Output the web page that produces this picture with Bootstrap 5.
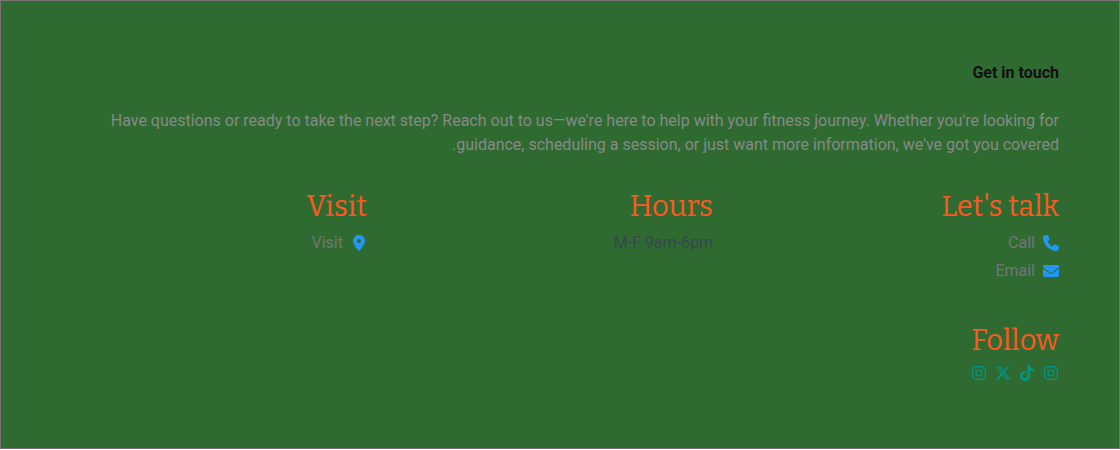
<!DOCTYPE html>
<html lang="en" dir="rtl">
<head>
<meta charset="utf-8">
<meta name="viewport" content="width=device-width, initial-scale=1">
<title>Get in touch</title>
<link href="https://cdn.jsdelivr.net/npm/bootstrap@5.3.0/dist/css/bootstrap.min.css" rel="stylesheet">
<style>
  body { font-family: Roboto, sans-serif; font-size: 16px; line-height: 24px; }
  .contact { background: #2f6b31; border: 1px solid #757575; padding: 60px; }
  .contact-title { font-size: 16px; font-weight: 700; line-height: 24px; color: #111; margin-bottom: 24px; }
  .contact-intro { color: #888; margin-bottom: 32px; }
  .contact-grid { --bs-gutter-x: 40px; --bs-gutter-y: 40px; }
  .block-title { font-family: "Roboto Slab", Bitter, serif; font-size: 29px; font-weight: 400; line-height: 36px; color: #ff5722; margin-bottom: 6px; }
  .contact-links { display: grid; gap: 4px; }
  .contact-links a { color: #757575; }
  .contact-links svg { color: #2196f3; width: 16px; height: 16px; }
  .hours { color: #37474f; }
  .social { padding-bottom: 7px; }
  .social a { color: #009688; line-height: 16px; }
  .social svg { width: 16px; height: 16px; display: block; }
</style>
</head>
<body>
<svg class="d-none" aria-hidden="true">
  <symbol id="instagram" viewBox="-32 0 512 512"><path d="M224.100 141c-63.600 0-114.900 51.300-114.900 114.900s51.300 114.900 114.900 114.900S339 319.500 339 255.900 287.700 141 224.100 141zm0 189.600c-41.100 0-74.700-33.500-74.700-74.700s33.500-74.700 74.700-74.700 74.700 33.500 74.700 74.700-33.600 74.700-74.700 74.700zm146.400-194.300c0 14.900-12 26.800-26.800 26.800-14.900 0-26.800-12-26.800-26.800s12-26.800 26.800-26.800 26.800 12 26.800 26.800zm76.100 27.200c-1.700-35.900-9.900-67.700-36.200-93.900-26.200-26.200-58-34.400-93.900-36.200-37-2.100-147.900-2.100-184.900 0-35.800 1.700-67.600 9.900-93.900 36.100s-34.400 58-36.200 93.900c-2.100 37-2.100 147.900 0 184.900 1.700 35.900 9.900 67.700 36.200 93.900s58 34.400 93.900 36.200c37 2.100 147.900 2.100 184.900 0 35.900-1.700 67.700-9.900 93.900-36.200 26.200-26.200 34.400-58 36.200-93.900 2.100-37 2.100-147.800 0-184.800zM398.800 388c-7.800 19.600-22.900 34.700-42.600 42.600-29.500 11.700-99.500 9-132.100 9s-102.700 2.600-132.100-9c-19.600-7.800-34.700-22.900-42.600-42.600-11.700-29.500-9-99.500-9-132.100s-2.600-102.700 9-132.100c7.800-19.600 22.900-34.700 42.600-42.600 29.500-11.700 99.500-9 132.100-9s102.700-2.600 132.100 9c19.600 7.800 34.700 22.900 42.600 42.600 11.700 29.500 9 99.500 9 132.100s2.700 102.700-9 132.100z"/></symbol>
</svg>
<section class="contact">
  <h2 class="contact-title">Get in touch</h2>
  <p class="contact-intro">Have questions or ready to take the next step? Reach out to us—we're here to help with your fitness journey. Whether you're looking for guidance, scheduling a session, or just want more information, we've got you covered.</p>
  <div class="row row-cols-1 row-cols-md-3 contact-grid">
    <div class="col">
      <h3 class="block-title">Let's talk</h3>
      <div class="contact-links">
        <a href="tel:" class="d-flex align-items-center gap-2 text-decoration-none"><svg viewBox="0 0 512 512" fill="currentColor" aria-hidden="true"><path d="M164.900 24.600c-7.700-18.600-28-28.500-47.400-23.200l-88 24C12.100 30.200 0 46 0 64C0 311.400 200.600 512 448 512c18 0 33.800-12.100 38.600-29.500l24-88c5.300-19.400-4.600-39.700-23.200-47.400l-96-40c-16.300-6.800-35.200-2.100-46.300 11.600L304.700 368C234.300 334.700 177.300 277.700 144 207.300L193.300 167c13.700-11.200 18.400-30 11.600-46.300l-40-96z"/></svg><span>Call</span></a>
        <a href="mailto:" class="d-flex align-items-center gap-2 text-decoration-none"><svg viewBox="0 0 512 512" fill="currentColor" aria-hidden="true"><path d="M48 64C21.500 64 0 85.500 0 112c0 15.100 7.100 29.300 19.200 38.400L236.800 313.600c11.400 8.500 27 8.500 38.400 0L492.800 150.400c12.100-9.100 19.200-23.300 19.200-38.400c0-26.500-21.500-48-48-48H48zM0 176V384c0 35.300 28.700 64 64 64H448c35.300 0 64-28.700 64-64V176L294.400 339.200c-22.800 17.100-54 17.100-76.800 0L0 176z"/></svg><span>Email</span></a>
      </div>
    </div>
    <div class="col">
      <h3 class="block-title">Hours</h3>
      <p class="hours mb-0">M-F 9am-6pm</p>
    </div>
    <div class="col">
      <h3 class="block-title">Visit</h3>
      <div class="contact-links">
        <a href="#visit" class="d-flex align-items-center gap-2 text-decoration-none"><svg viewBox="-64 0 512 512" fill="currentColor" aria-hidden="true"><path d="M215.700 499.200C267 435 384 279.400 384 192C384 86 298 0 192 0S0 86 0 192c0 87.400 117 243 168.300 307.200c12.300 15.300 35.100 15.300 47.400 0zM192 128a64 64 0 1 1 0 128 64 64 0 1 1 0-128z"/></svg><span>Visit</span></a>
      </div>
    </div>
    <div class="col">
      <h3 class="block-title">Follow</h3>
      <div class="social d-flex gap-2">
        <a href="#instagram" aria-label="Instagram"><svg fill="currentColor"><use href="#instagram"/></svg></a>
        <a href="#tiktok" aria-label="TikTok"><svg viewBox="-32 0 512 512" fill="currentColor"><path d="M448 209.900a210.100 210.100 0 0 1-122.800-39.300V349.400A162.600 162.600 0 1 1 185 188.300V278.200a74.600 74.600 0 1 0 52.200 71.200V0l88 0a121.200 121.200 0 0 0 1.900 22.200h0A122.200 122.200 0 0 0 381 102.400a121.400 121.400 0 0 0 67 20.100z"/></svg></a>
        <a href="#x" aria-label="X"><svg viewBox="0 0 512 512" fill="currentColor"><path d="M389.200 48h70.600L305.600 224.200 487 464H345L233.700 318.600 106.500 464H35.800L200.700 275.500 26.800 48H172.400L272.900 180.900 389.200 48zM364.400 421.800h39.100L151.100 88h-42L364.400 421.800z"/></svg></a>
        <a href="#instagram-studio" aria-label="Instagram studio"><svg fill="currentColor"><use href="#instagram"/></svg></a>
      </div>
    </div>
  </div>
</section>
<script src="https://cdn.jsdelivr.net/npm/bootstrap@5.3.0/dist/js/bootstrap.bundle.min.js"></script>
</body>
</html>
